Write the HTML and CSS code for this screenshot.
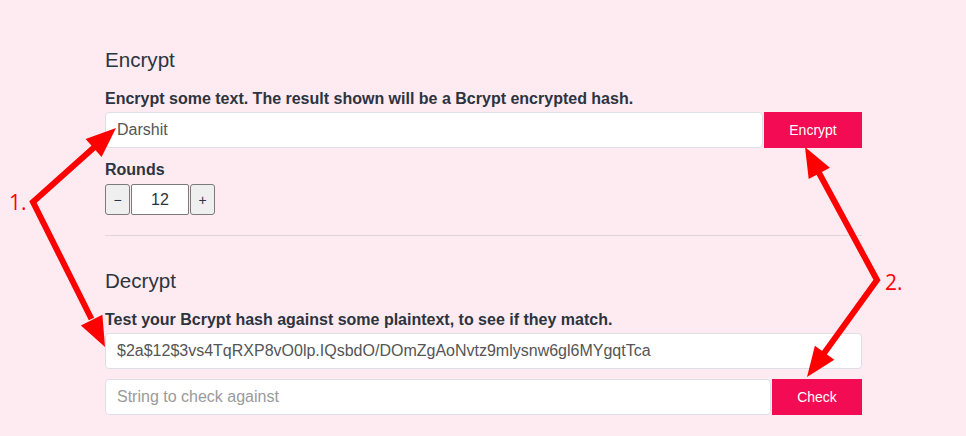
FILE: index.html
```html
<!DOCTYPE html>
<html lang="en">
<head>
<meta charset="utf-8">
<title>Bcrypt</title>
<link rel="stylesheet" href="styles.css">
</head>
<body>
<main class="page">
  <section class="panel">
    <h2 class="title">Encrypt</h2>
    <label class="field-label">Encrypt some text. The result shown will be a Bcrypt encrypted hash.</label>
    <div class="input-row">
      <input class="text-input" type="text" value="Darshit">
      <button class="btn btn-encrypt">Encrypt</button>
    </div>
    <label class="field-label rounds-label">Rounds</label>
    <div class="stepper">
      <button class="step-btn">&minus;</button>
      <input class="step-input" type="text" value="12">
      <button class="step-btn">+</button>
    </div>
  </section>
  <hr class="divider">
  <section class="panel">
    <h2 class="title">Decrypt</h2>
    <label class="field-label">Test your Bcrypt hash against some plaintext, to see if they match.</label>
    <input class="text-input full" type="text" value="$2a$12$3vs4TqRXP8vO0lp.IQsbdO/DOmZgAoNvtz9mlysnw6gl6MYgqtTca">
    <div class="input-row check-row">
      <input class="text-input" type="text" placeholder="String to check against">
      <button class="btn btn-check">Check</button>
    </div>
  </section>
</main>
<svg class="annotations" width="966" height="436" viewBox="0 0 966 436">
  <g fill="#ff0000" stroke="none">
    <polygon points="116,128 101.6,156.9 85.6,139"/>
    <polygon points="105,347 102.4,314.8 80.9,325.4"/>
    <polygon points="805,147 829.9,167.7 808.7,179.1"/>
    <polygon points="807,377 834.3,359.7 814.9,345.7"/>
  </g>
  <g fill="none" stroke="#ff0000" stroke-width="6" stroke-linejoin="miter">
    <polyline points="94.5,147 33,202 91.5,319"/>
    <polyline points="818.5,172 877,280 823.5,354"/>
  </g>
  <text class="anno" x="9" y="210">1.</text>
  <text class="anno" x="885" y="290">2.</text>
</svg>
</body>
</html>
```

FILE: styles.css
```css
html, body {
  margin: 0;
  padding: 0;
}
body {
  background: #fdebf1;
  font-family: "Liberation Sans", Arial, sans-serif;
  color: #2c3440;
  width: 966px;
  height: 436px;
  overflow: hidden;
  position: relative;
}
.page {
  padding: 48px 0 0 105px;
  width: 757px;
}
.title {
  margin: 0;
  font-size: 20.6px;
  line-height: 24px;
  font-weight: normal;
  color: #2c3440;
}
.field-label {
  display: block;
  margin: 17px 0 3px;
  font-size: 16px;
  line-height: 20px;
  font-weight: bold;
  color: #2c3440;
}
.rounds-label {
  margin: 12px 0 4px;
}
.input-row {
  display: flex;
  gap: 1px;
  height: 36px;
}
.text-input {
  box-sizing: border-box;
  height: 36px;
  flex: 1;
  min-width: 0;
  border: 1px solid #dcdfe4;
  border-radius: 4px;
  background: #fff;
  padding: 0 11px;
  font-family: "Liberation Sans", Arial, sans-serif;
  font-size: 16px;
  color: #555;
  outline: none;
}
.text-input::placeholder {
  color: #9a9a9a;
}
.text-input.full {
  display: block;
  width: 100%;
}
.check-row {
  margin-top: 10px;
}
.btn {
  border: none;
  border-radius: 0;
  background: #f30b53;
  color: #fff;
  font-family: "Liberation Sans", Arial, sans-serif;
  font-size: 14px;
  height: 36px;
  padding: 0;
}
.btn-encrypt {
  width: 98px;
}
.btn-check {
  width: 90px;
}
.stepper {
  display: flex;
  gap: 1px;
  height: 31px;
}
.step-btn {
  box-sizing: border-box;
  width: 25px;
  height: 31px;
  padding: 0;
  border: 1px solid #7a7a7a;
  border-radius: 3px;
  background: #efefef;
  color: #2c3440;
  font-family: "Liberation Sans", Arial, sans-serif;
  font-size: 14px;
}
.step-input {
  box-sizing: border-box;
  width: 58px;
  height: 31px;
  border: 1px solid #7a7a7a;
  border-radius: 2px;
  background: #fff;
  text-align: center;
  font-family: "Liberation Sans", Arial, sans-serif;
  font-size: 16px;
  color: #2c3440;
  padding: 0;
  outline: none;
}
.divider {
  border: 0;
  border-top: 1px solid #ddd8dc;
  margin: 20px 0 33px;
  height: 0;
}
.annotations {
  position: absolute;
  top: 0;
  left: 0;
  pointer-events: none;
}
.anno {
  fill: #ff0000;
  font-family: "Open Sans", "Liberation Sans", sans-serif;
  font-size: 21px;
}
```
